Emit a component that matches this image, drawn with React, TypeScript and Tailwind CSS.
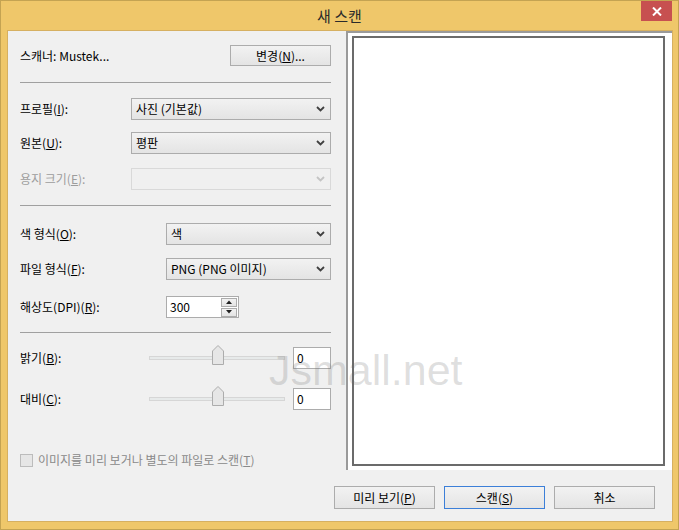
import type { ReactNode } from 'react';

const font = "font-['Noto_Sans_CJK_KR',sans-serif]";

function Chevron({ light }: { light?: boolean }) {
  return (
    <svg width="9" height="6" viewBox="0 0 9 6">
      <path d="M1 1 L4.5 4.5 L8 1" fill="none" stroke={light ? '#c4c4c4' : '#404040'} strokeWidth="1.8" />
    </svg>
  );
}

function Combo({ value, disabled, className }: { value?: string; disabled?: boolean; className: string }) {
  return (
    <div
      className={
        'flex h-[22px] items-center justify-between border pl-[4px] pr-[5px] ' +
        (disabled ? 'border-[#d9d9d9] bg-[#f0f0f0] ' : 'border-[#acacac] bg-linear-to-b from-[#f2f2f2] to-[#e4e4e4] ') +
        className
      }
    >
      <span className="text-[12px] text-black">{value}</span>
      <Chevron light={disabled} />
    </div>
  );
}

function Btn({ children, primary, className = '' }: { children: ReactNode; primary?: boolean; className?: string }) {
  return (
    <div
      className={
        'flex items-center justify-center border bg-linear-to-b from-[#f2f2f2] to-[#e4e4e4] text-[12px] text-black ' +
        (primary ? 'border-[#3c7fd8] ' : 'border-[#acacac] ') +
        className
      }
    >
      {children}
    </div>
  );
}

function Label({ children, w, gray }: { children: ReactNode; w: string; gray?: boolean }) {
  return <div className={`${w} shrink-0 text-[12px] ${gray ? 'text-[#9d9d9d]' : 'text-black'}`}>{children}</div>;
}

function Sep({ mt }: { mt: string }) {
  return <div className={`${mt} h-px w-[311px] bg-[#a0a0a0]`} />;
}

function Slider() {
  return (
    <div className="relative flex h-[22px] w-[136px] items-center">
      <div className="h-[4px] w-full border border-[#d6d6d6] bg-[#e7eaea]" />
      <svg className="absolute left-[63px] top-[-2px]" width="12" height="20" viewBox="0 0 12 20">
        <path d="M0.5 19.5 V6 L6 0.5 L11.5 6 V19.5 Z" fill="#e6e6e6" stroke="#acacac" />
      </svg>
    </div>
  );
}

function NumBox({ v, className }: { v: string; className: string }) {
  return (
    <div className={'flex h-[22px] items-center border border-[#acacac] bg-white pl-[3px] text-[12px] text-black ' + className}>
      {v}
    </div>
  );
}

export default function App() {
  return (
    <div className={`relative flex h-[530px] w-[679px] flex-col border border-[#c4a352] bg-[#efc76a] leading-[16px] ${font}`}>
      <div className="relative flex h-[29px] shrink-0 items-center justify-center">
        <span className="text-[15px] text-[#2b2b2b]">새 스캔</span>
        <div className="absolute right-[6px] top-0 flex h-[20px] w-[31px] items-center justify-center bg-[#c75050]">
          <svg width="10" height="9" viewBox="0 0 10 9">
            <path d="M1 0.5 L9 8.5 M9 0.5 L1 8.5" stroke="white" strokeWidth="2" />
          </svg>
        </div>
      </div>

      <div className="ml-[6px] flex h-[492px] w-[666px] flex-col border border-[#d6b061] bg-[#f0f0f0]">
        <div className="flex h-[439px]">
          {/* left column */}
          <div className="flex w-[338px] shrink-0 flex-col pl-[12px]">
            <div className="mt-[14px] flex h-[21px] w-[311px] items-center justify-between">
              <span className="text-[12px] text-black">스캐너: Mustek...</span>
              <Btn className="h-[21px] w-[101px]">
                변경(<u>N</u>)...
              </Btn>
            </div>
            <Sep mt="mt-[16px]" />

            <div className="mt-[15px] flex items-center">
              <Label w="w-[111px]">
                프로필(<u>I</u>):
              </Label>
              <Combo value="사진 (기본값)" className="w-[200px]" />
            </div>
            <div className="mt-[12px] flex items-center">
              <Label w="w-[111px]">
                원본(<u>U</u>):
              </Label>
              <Combo value="평판" className="w-[200px]" />
            </div>
            <div className="mt-[14px] flex items-center">
              <Label w="w-[111px]" gray>
                용지 크기(<u>E</u>):
              </Label>
              <Combo disabled className="w-[200px]" />
            </div>
            <Sep mt="mt-[15px]" />

            <div className="mt-[17px] flex items-center">
              <Label w="w-[146px]">
                색 형식(<u>O</u>):
              </Label>
              <Combo value="색" className="w-[165px]" />
            </div>
            <div className="mt-[13px] flex items-center">
              <Label w="w-[146px]">
                파일 형식(<u>F</u>):
              </Label>
              <Combo value="PNG (PNG 이미지)" className="w-[165px]" />
            </div>
            <div className="mt-[16px] flex items-center">
              <Label w="w-[146px]">
                해상도(DPI)(<u>R</u>):
              </Label>
              <div className="flex h-[22px] w-[73px] items-center justify-between border border-[#acacac] bg-white pl-[3px] pr-px text-[12px] text-black">
                <span>300</span>
                <div className="flex flex-col gap-px">
                  <div className="flex h-[9px] w-[16px] items-center justify-center border border-[#acacac] bg-linear-to-b from-[#f2f2f2] to-[#e4e4e4]">
                    <svg width="6" height="4" viewBox="0 0 6 4">
                      <path d="M0 4 L3 0.5 L6 4 Z" fill="#202020" />
                    </svg>
                  </div>
                  <div className="flex h-[9px] w-[16px] items-center justify-center border border-[#acacac] bg-linear-to-b from-[#f2f2f2] to-[#e4e4e4]">
                    <svg width="6" height="4" viewBox="0 0 6 4">
                      <path d="M0 0 L3 3.5 L6 0 Z" fill="#202020" />
                    </svg>
                  </div>
                </div>
              </div>
            </div>
            <Sep mt="mt-[14px]" />

            <div className="mt-[14px] flex items-center">
              <Label w="w-[129px]">
                밝기(<u>B</u>):
              </Label>
              <Slider />
              <NumBox v="0" className="ml-[8px] w-[38px]" />
            </div>
            <div className="mt-[19px] flex items-center">
              <Label w="w-[129px]">
                대비(<u>C</u>):
              </Label>
              <Slider />
              <NumBox v="0" className="ml-[8px] w-[38px]" />
            </div>

            <div className="mt-[42px] flex items-center gap-[5px]">
              <div className="h-[13px] w-[13px] border border-[#bcbcbc] bg-[#e6e6e6]" />
              <span className="text-[12px] text-[#8a8a8a]">
                이미지를 미리 보거나 별도의 파일로 스캔(<u>T</u>)
              </span>
            </div>
          </div>

          {/* preview */}
          <div className="flex w-[326px] flex-col border-l-2 border-t-2 border-[#9a9a9a] bg-white pl-[4px] pt-[3px]">
            <div className="h-[430px] w-[313px] border-2 border-[#6b6b6b] bg-white" />
          </div>
        </div>

        <div className="mt-[16px] flex justify-end gap-[9px] pr-[17px]">
          <Btn className="h-[23px] w-[101px]">
            미리 보기(<u>P</u>)
          </Btn>
          <Btn primary className="h-[23px] w-[101px]">
            스캔(<u>S</u>)
          </Btn>
          <Btn className="h-[23px] w-[101px]">취소</Btn>
        </div>
      </div>

      <div className="pointer-events-none absolute left-[268px] top-[344px] font-['Liberation_Sans',sans-serif] text-[43px] leading-[50px] text-[rgba(110,110,110,0.22)]">
        Jsmall.net
      </div>
    </div>
  );
}
